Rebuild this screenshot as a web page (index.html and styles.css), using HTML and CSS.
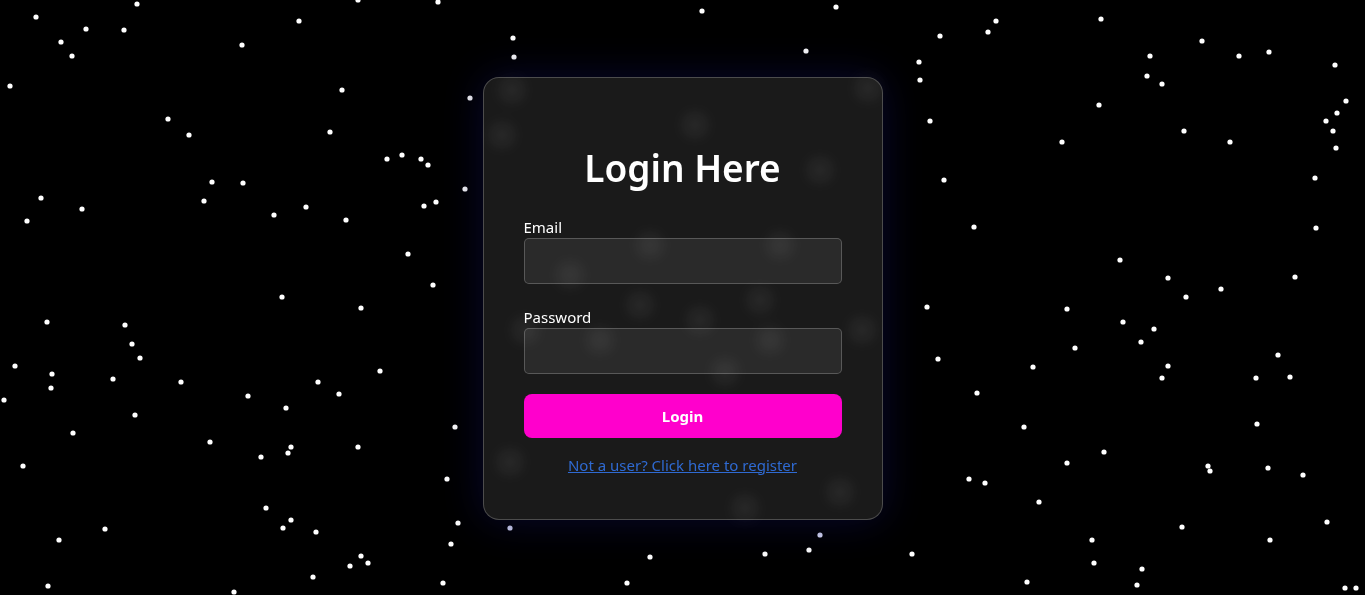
FILE: index.html
```html
<!DOCTYPE html>
<html lang="en">
<head>
<meta charset="utf-8">
<title>Login</title>
<link rel="stylesheet" href="styles.css">
</head>
<body>
<svg class="stars" viewBox="0 0 1365 595" preserveAspectRatio="none" aria-hidden="true">
<defs>
<filter id="soft" x="-50%" y="-50%" width="200%" height="200%"><feGaussianBlur stdDeviation="10"/></filter>
</defs>
<g fill="#fff">
<circle cx="36" cy="17" r="2.6"/><circle cx="61" cy="42" r="2.6"/><circle cx="72" cy="56" r="2.6"/><circle cx="86" cy="29" r="2.6"/><circle cx="124" cy="30" r="2.6"/><circle cx="137" cy="4" r="2.6"/><circle cx="10" cy="86" r="2.6"/><circle cx="242" cy="45" r="2.6"/><circle cx="299" cy="21" r="2.6"/><circle cx="358" cy="0" r="2.6"/><circle cx="168" cy="119" r="2.6"/><circle cx="189" cy="135" r="2.6"/><circle cx="342" cy="90" r="2.6"/><circle cx="330" cy="132" r="2.6"/><circle cx="387" cy="159" r="2.6"/><circle cx="402" cy="155" r="2.6"/><circle cx="421" cy="159" r="2.6"/><circle cx="428" cy="165" r="2.6"/><circle cx="212" cy="182" r="2.6"/><circle cx="243" cy="183" r="2.6"/><circle cx="204" cy="201" r="2.6"/><circle cx="41" cy="198" r="2.6"/><circle cx="27" cy="221" r="2.6"/><circle cx="82" cy="209" r="2.6"/><circle cx="274" cy="215" r="2.6"/><circle cx="306" cy="207" r="2.6"/><circle cx="346" cy="220" r="2.6"/><circle cx="436" cy="202" r="2.6"/><circle cx="424" cy="206" r="2.6"/><circle cx="465" cy="189" r="2.6"/><circle cx="470" cy="98" r="2.6"/><circle cx="408" cy="254" r="2.6"/><circle cx="433" cy="285" r="2.6"/><circle cx="282" cy="297" r="2.6"/><circle cx="361" cy="308" r="2.6"/><circle cx="47" cy="322" r="2.6"/><circle cx="125" cy="325" r="2.6"/><circle cx="132" cy="344" r="2.6"/><circle cx="140" cy="358" r="2.6"/><circle cx="15" cy="366" r="2.6"/><circle cx="52" cy="374" r="2.6"/><circle cx="51" cy="388" r="2.6"/><circle cx="113" cy="379" r="2.6"/><circle cx="181" cy="382" r="2.6"/><circle cx="248" cy="396" r="2.6"/><circle cx="318" cy="382" r="2.6"/><circle cx="339" cy="394" r="2.6"/><circle cx="380" cy="371" r="2.6"/><circle cx="4" cy="400" r="2.6"/><circle cx="135" cy="415" r="2.6"/><circle cx="286" cy="408" r="2.6"/><circle cx="73" cy="433" r="2.6"/><circle cx="210" cy="442" r="2.6"/><circle cx="261" cy="457" r="2.6"/><circle cx="288" cy="453" r="2.6"/><circle cx="291" cy="447" r="2.6"/><circle cx="358" cy="447" r="2.6"/><circle cx="23" cy="466" r="2.6"/><circle cx="266" cy="508" r="2.6"/><circle cx="291" cy="520" r="2.6"/><circle cx="283" cy="528" r="2.6"/><circle cx="316" cy="532" r="2.6"/><circle cx="105" cy="529" r="2.6"/><circle cx="59" cy="540" r="2.6"/><circle cx="361" cy="556" r="2.6"/><circle cx="350" cy="566" r="2.6"/><circle cx="368" cy="563" r="2.6"/><circle cx="313" cy="577" r="2.6"/><circle cx="48" cy="586" r="2.6"/><circle cx="234" cy="592" r="2.6"/><circle cx="455" cy="427" r="2.6"/><circle cx="447" cy="479" r="2.6"/><circle cx="458" cy="523" r="2.6"/><circle cx="451" cy="544" r="2.6"/><circle cx="443" cy="583" r="2.6"/><circle cx="438" cy="2" r="2.6"/><circle cx="513" cy="38" r="2.6"/><circle cx="514" cy="57" r="2.6"/>
<circle cx="702" cy="11" r="2.6"/><circle cx="836" cy="7" r="2.6"/><circle cx="806" cy="51" r="2.6"/><circle cx="919" cy="62" r="2.6"/><circle cx="920" cy="80" r="2.6"/><circle cx="940" cy="36" r="2.6"/><circle cx="988" cy="32" r="2.6"/><circle cx="996" cy="21" r="2.6"/><circle cx="1101" cy="19" r="2.6"/><circle cx="1150" cy="56" r="2.6"/><circle cx="1147" cy="76" r="2.6"/><circle cx="1162" cy="84" r="2.6"/><circle cx="1202" cy="41" r="2.6"/><circle cx="1239" cy="56" r="2.6"/><circle cx="1269" cy="52" r="2.6"/><circle cx="1335" cy="65" r="2.6"/><circle cx="1346" cy="101" r="2.6"/><circle cx="1337" cy="113" r="2.6"/><circle cx="1326" cy="121" r="2.6"/><circle cx="1333" cy="131" r="2.6"/><circle cx="1336" cy="148" r="2.6"/><circle cx="1099" cy="105" r="2.6"/><circle cx="1184" cy="131" r="2.6"/><circle cx="1062" cy="142" r="2.6"/><circle cx="1230" cy="142" r="2.6"/><circle cx="930" cy="121" r="2.6"/><circle cx="944" cy="180" r="2.6"/><circle cx="1315" cy="178" r="2.6"/><circle cx="974" cy="227" r="2.6"/><circle cx="1316" cy="228" r="2.6"/><circle cx="1120" cy="260" r="2.6"/><circle cx="1168" cy="278" r="2.6"/><circle cx="1186" cy="297" r="2.6"/><circle cx="1221" cy="289" r="2.6"/><circle cx="1295" cy="277" r="2.6"/><circle cx="927" cy="307" r="2.6"/><circle cx="1067" cy="309" r="2.6"/><circle cx="1123" cy="322" r="2.6"/><circle cx="1154" cy="329" r="2.6"/><circle cx="1141" cy="342" r="2.6"/><circle cx="1075" cy="348" r="2.6"/><circle cx="938" cy="359" r="2.6"/><circle cx="1033" cy="367" r="2.6"/><circle cx="1168" cy="366" r="2.6"/><circle cx="1162" cy="378" r="2.6"/><circle cx="1256" cy="378" r="2.6"/><circle cx="1278" cy="355" r="2.6"/><circle cx="1290" cy="377" r="2.6"/><circle cx="977" cy="393" r="2.6"/><circle cx="1024" cy="427" r="2.6"/><circle cx="1257" cy="424" r="2.6"/><circle cx="1104" cy="452" r="2.6"/><circle cx="1067" cy="463" r="2.6"/><circle cx="1208" cy="466" r="2.6"/><circle cx="1210" cy="471" r="2.6"/><circle cx="1268" cy="468" r="2.6"/><circle cx="1303" cy="475" r="2.6"/><circle cx="969" cy="479" r="2.6"/><circle cx="985" cy="483" r="2.6"/><circle cx="1039" cy="502" r="2.6"/><circle cx="1327" cy="522" r="2.6"/><circle cx="1182" cy="527" r="2.6"/><circle cx="1092" cy="540" r="2.6"/><circle cx="1270" cy="540" r="2.6"/><circle cx="912" cy="554" r="2.6"/><circle cx="1094" cy="563" r="2.6"/><circle cx="1142" cy="569" r="2.6"/><circle cx="1137" cy="585" r="2.6"/><circle cx="1345" cy="588" r="2.6"/><circle cx="1356" cy="588" r="2.6"/><circle cx="1027" cy="582" r="2.6"/><circle cx="809" cy="550" r="2.6"/><circle cx="765" cy="554" r="2.6"/><circle cx="650" cy="557" r="2.6"/><circle cx="627" cy="583" r="2.6"/>
</g>
<g fill="#dfe2ff">
<circle cx="510" cy="528" r="2.6"/><circle cx="820" cy="535" r="2.6"/>
</g>
<g fill="#fff" opacity="0.7" filter="url(#soft)">
<circle cx="512" cy="90" r="4"/><circle cx="695" cy="125" r="4"/><circle cx="820" cy="170" r="4"/><circle cx="650" cy="245" r="4"/><circle cx="780" cy="245" r="4"/><circle cx="570" cy="275" r="4"/><circle cx="760" cy="300" r="4"/><circle cx="640" cy="305" r="4"/><circle cx="770" cy="340" r="4"/><circle cx="725" cy="372" r="4"/><circle cx="862" cy="330" r="4"/><circle cx="510" cy="462" r="4"/><circle cx="745" cy="508" r="4"/><circle cx="840" cy="492" r="4"/><circle cx="502" cy="135" r="4"/><circle cx="868" cy="88" r="4"/><circle cx="525" cy="330" r="4"/><circle cx="700" cy="320" r="4"/><circle cx="600" cy="340" r="4"/>
</g>
</svg>
<main class="page">
  <form class="card">
    <h1 class="title">Login Here</h1>
    <label class="label" for="email">Email</label>
    <input class="field" id="email" type="email">
    <label class="label label-second" for="password">Password</label>
    <input class="field" id="password" type="password">
    <button class="btn" type="button">Login</button>
    <a class="link" href="#">Not a user? Click here to register</a>
  </form>
</main>
</body>
</html>
```
FILE: styles.css
```css
* { box-sizing: border-box; }
html, body {
  margin: 0;
  height: 100%;
  background: #000;
  overflow: hidden;
}
body {
  font-family: "Noto Sans", "Open Sans", sans-serif;
  color: #fff;
}
.stars {
  position: fixed;
  inset: 0;
  width: 100%;
  height: 100%;
  z-index: 0;
}
.page {
  position: relative;
  z-index: 1;
  height: 100%;
  display: flex;
  align-items: center;
  justify-content: center;
}
.card {
  width: 400px;
  height: 443px;
  margin-top: 1px;
  padding: 40px 40px;
  display: flex;
  flex-direction: column;
  background: rgba(255, 255, 255, 0.1);
  border: 1px solid rgba(255, 255, 255, 0.22);
  border-radius: 16px;
  box-shadow: 0 0 40px rgba(12, 12, 70, 0.65);
}
.title {
  margin: 29px 0 27px;
  font-size: 37px;
  line-height: 42px;
  font-weight: 600;
  text-align: center;
}
.label {
  font-size: 15px;
  line-height: 22px;
  font-weight: 400;
}
.label-second { margin-top: 22px; }
.field {
  height: 46px;
  width: 100%;
  background: rgba(255, 255, 255, 0.07);
  border: 1px solid rgba(255, 255, 255, 0.22);
  border-radius: 5px;
  color: #fff;
  font: inherit;
  padding: 0 10px;
}
.btn {
  margin-top: 20px;
  height: 44px;
  width: 100%;
  border: 0;
  border-radius: 8px;
  background: #ff00cc;
  color: #fff;
  font-family: inherit;
  font-size: 15px;
  font-weight: 700;
}
.link {
  margin-top: 16px;
  align-self: center;
  font-size: 15px;
  line-height: 22px;
  color: #2f6ad2;
  text-decoration: underline;
}
```
